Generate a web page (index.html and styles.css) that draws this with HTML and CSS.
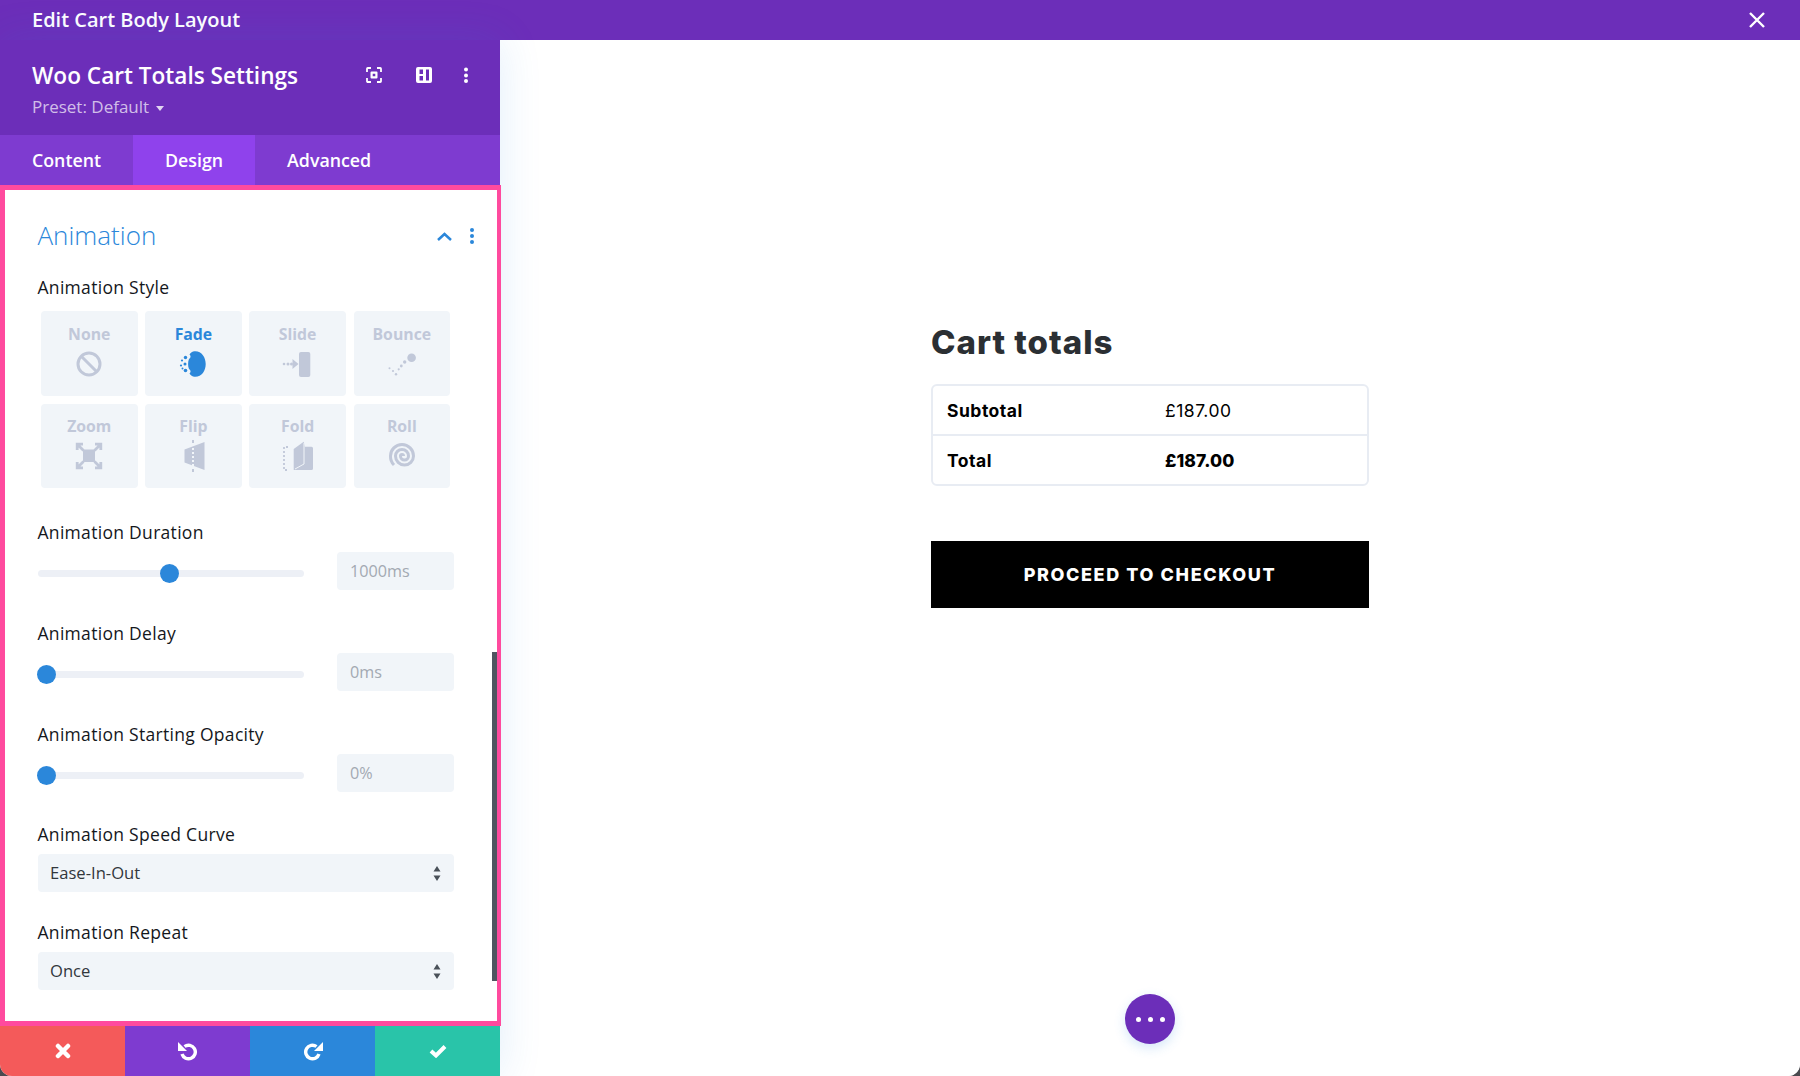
FILE: index.html
```html
<!DOCTYPE html>
<html lang="en">
<head>
<meta charset="utf-8">
<title>Edit Cart Body Layout</title>
<link rel="stylesheet" href="styles.css">
</head>
<body>
<div class="window">
  <header class="topbar">
    <span class="topbar-title">Edit Cart Body Layout</span>
    <svg class="close" viewBox="0 0 16 16" width="16" height="16"><path d="M1 1l14 14M15 1L1 15" stroke="#fff" stroke-width="2.400" fill="none"/></svg>
  </header>
  <div class="main">
    <aside class="sidebar">
      <div class="head">
        <div class="head-row">
          <h1 class="head-title">Woo Cart Totals Settings</h1>
          <div class="head-icons">
            <svg viewBox="0 0 16 16" width="16" height="16"><path d="M1 5V1.800C1 1.400 1.400 1 1.800 1H5M11 1h3.200c.4 0 .8.4.8.8V5M15 11v3.200c0 .4-.4.8-.8.8H11M5 15H1.800c-.4 0-.8-.4-.8-.8V11" fill="none" stroke="#fff" stroke-width="1.800"/><path fill-rule="evenodd" d="M5.500 4.500h5a1 1 0 0 1 1 1v5a1 1 0 0 1-1 1h-5a1 1 0 0 1-1-1v-5a1 1 0 0 1 1-1zM6.700 6.700v2.600h2.600V6.700z" fill="#fff"/></svg>
            <svg viewBox="0 0 16 16" width="16" height="16"><path fill-rule="evenodd" d="M2 0h12a2 2 0 0 1 2 2v12a2 2 0 0 1-2 2H2a2 2 0 0 1-2-2V2a2 2 0 0 1 2-2zM3.500 2.500v4.500h3.500V2.500zM3.500 9v4.500h3.500V9zM10 2.500v11h3v-11z" fill="#fff"/></svg>
            <svg class="head-kebab" viewBox="0 0 4 16" width="4" height="16"><circle cx="2" cy="2.500" r="2" fill="#fff"/><circle cx="2" cy="8.500" r="2" fill="#fff"/><circle cx="2" cy="14" r="2" fill="#fff"/></svg>
          </div>
        </div>
        <div class="preset">Preset: Default <span class="caret"></span></div>
      </div>
      <nav class="tabs">
        <span class="tab">Content</span>
        <span class="tab tab-active">Design</span>
        <span class="tab">Advanced</span>
      </nav>
      <section class="panel">
        <div class="section-head">
          <h2 class="section-title">Animation</h2>
          <div class="section-icons">
            <svg viewBox="0 0 15 9" width="15" height="9"><path d="M1 8l6.500-6L14 8" fill="none" stroke="#2b87da" stroke-width="2.500"/></svg>
            <svg viewBox="0 0 4 16" width="4" height="16"><circle cx="2" cy="2" r="2" fill="#2b87da"/><circle cx="2" cy="8" r="2" fill="#2b87da"/><circle cx="2" cy="14" r="2" fill="#2b87da"/></svg>
          </div>
        </div>

        <div class="label label-style">Animation Style</div>
        <div class="tiles">
          <div class="tile"><span class="tile-name">None</span>
            <svg class="tile-icon" viewBox="0 0 26 26"><circle cx="13" cy="13" r="11" fill="none" stroke="currentColor" stroke-width="3"/><path d="M5.500 5.500l15 15" stroke="currentColor" stroke-width="3"/></svg></div>
          <div class="tile tile-active"><span class="tile-name">Fade</span>
            <svg class="tile-icon" viewBox="0 0 26 26"><path fill="currentColor" d="M14.500 .2C21.500 -.3 25.700 6 25.700 13S21.500 26.300 14.500 25.800C12.500 25.600 10.500 24.500 9.500 22.500 11 21.500 11 19 9 18 7.800 15.500 7.800 10.500 9 8 11 7 11 4.500 9.500 3.500 10.500 1.500 12.500 .4 14.500 .2Z"/><g fill="currentColor"><circle cx="5.500" cy="6.500" r="1.700"/><circle cx="2" cy="9.500" r="1.100"/><circle cx="5" cy="13" r="1.500"/><circle cx="1" cy="14.500" r="1.100"/><circle cx="5.500" cy="19.500" r="1.800"/><circle cx="2.500" cy="17.500" r="1"/></g></svg></div>
          <div class="tile"><span class="tile-name">Slide</span>
            <svg class="tile-icon" viewBox="0 0 26 26"><rect x="14" y="1" width="11.300" height="25" rx="2" fill="currentColor"/><path d="M7.500 8l6 5-6 5z" fill="currentColor"/><circle cx="-1" cy="13" r="1.300" fill="currentColor"/><circle cx="3" cy="13" r="1.500" fill="currentColor"/><circle cx="6.500" cy="13" r="1.500" fill="currentColor"/></svg></div>
          <div class="tile"><span class="tile-name">Bounce</span>
            <svg class="tile-icon" viewBox="0 0 26 26"><circle cx="22.600" cy="6.700" r="4.300" fill="currentColor"/><circle cx="15.700" cy="11" r="1.700" fill="currentColor"/><circle cx="12.300" cy="15" r="1.400" fill="currentColor"/><circle cx="9.700" cy="18.300" r="1.100" fill="currentColor"/><circle cx="7" cy="23.300" r="1.200" fill="currentColor"/><circle cx="4" cy="20" r="1.100" fill="currentColor"/><circle cx=".5" cy="17.300" r="1" fill="currentColor"/></svg></div>
          <div class="tile"><span class="tile-name">Zoom</span>
            <svg class="tile-icon" viewBox="0 0 26 26"><rect x="7" y="6.500" width="12" height="12.500" fill="currentColor"/><path d="M1.200 7V1.200H7M24.800 7V1.200H19M1.200 19v5.800H7M24.800 19v5.800H19M2 2l5.500 5.500M24 2l-5.500 5.500M2 24l5.500-5.500M24 24l-5.500-5.500" fill="none" stroke="currentColor" stroke-width="2.800"/></svg></div>
          <div class="tile"><span class="tile-name">Flip</span>
            <svg class="tile-icon" viewBox="0 0 26 26"><path d="M4.500 6.500L24.500-1v28L4.500 19.500z" fill="currentColor"/><path d="M13-3v32" stroke="#f1f5f9" stroke-width="2" stroke-dasharray="2 2"/><path d="M13-3v3M13 26v3" stroke="currentColor" stroke-width="2"/></svg></div>
          <div class="tile"><span class="tile-name">Fold</span>
            <svg class="tile-icon" viewBox="0 0 26 26"><path d="M3 4h-4v23h4" fill="none" stroke="currentColor" stroke-width="1.800" stroke-dasharray="2 2"/><path d="M8.700 6L18.700-1.300 20 3.700h6.500a1.500 1.500 0 0 1 1.500 1.500V25.500a1.500 1.500 0 0 1-1.500 1.500H8.700z" fill="currentColor"/><path d="M19 0v21l-9 5" fill="none" stroke="#f1f5f9" stroke-width="1"/></svg></div>
          <div class="tile"><span class="tile-name">Roll</span>
            <svg class="tile-icon" viewBox="0 0 26 26"><path d="M14.500 13A1.500 1.500 0 0 0 11.500 13A4 4 0 0 0 19.500 13A6.500 6.500 0 0 0 6.500 13A9 9 0 0 0 24.500 13A11.500 11.500 0 0 0 1.500 13A12 12 0 0 0 5 22" fill="none" stroke="currentColor" stroke-width="3"/></svg></div>
        </div>

        <div class="label label-first">Animation Duration</div>
        <div class="slider-row">
          <div class="slider"><span class="thumb" style="left:123px"></span></div>
          <div class="value">1000ms</div>
        </div>

        <div class="label label-next">Animation Delay</div>
        <div class="slider-row">
          <div class="slider"><span class="thumb" style="left:0"></span></div>
          <div class="value">0ms</div>
        </div>

        <div class="label label-next">Animation Starting Opacity</div>
        <div class="slider-row">
          <div class="slider"><span class="thumb" style="left:0"></span></div>
          <div class="value">0%</div>
        </div>

        <div class="label label-speed">Animation Speed Curve</div>
        <div class="select"><span>Ease-In-Out</span>
          <svg viewBox="0 0 8 15" width="8" height="15"><path d="M4 0l3.500 5.500h-7zM4 15L.5 9.500h7z" fill="#4a5159"/></svg></div>

        <div class="label label-repeat">Animation Repeat</div>
        <div class="select"><span>Once</span>
          <svg viewBox="0 0 8 15" width="8" height="15"><path d="M4 0l3.500 5.500h-7zM4 15L.5 9.500h7z" fill="#4a5159"/></svg></div>

        <div class="scrollbar"></div>
      </section>
      <footer class="actions">
        <div class="action action-red"><svg viewBox="0 0 16 16" width="16" height="16"><path d="M3 3l10 10M13 3L3 13" stroke="#fff" stroke-width="4.500" stroke-linecap="round" fill="none"/></svg></div>
        <div class="action action-purple"><svg viewBox="0 0 20 20" width="20" height="20"><g transform="translate(20 0) scale(-1 1)"><path d="M13.500 5.500A6.800 6.800 0 1 0 16 13" fill="none" stroke="#fff" stroke-width="3.400"/><path d="M20 1v9h-9z" fill="#fff"/></g></svg></div>
        <div class="action action-blue"><svg viewBox="0 0 20 20" width="20" height="20"><path d="M13.500 5.500A6.800 6.800 0 1 0 16 13" fill="none" stroke="#fff" stroke-width="3.400"/><path d="M20 1v9h-9z" fill="#fff"/></svg></div>
        <div class="action action-green"><svg viewBox="0 0 18 14" width="18" height="14"><path d="M2 7l5 4.500L16 2.500" fill="none" stroke="#fff" stroke-width="4"/></svg></div>
      </footer>
    </aside>
    <main class="canvas">
      <div class="cart">
        <h2 class="cart-title">Cart totals</h2>
        <div class="cart-table">
          <div class="cart-row"><span class="cart-key">Subtotal</span><span class="cart-val">£187.00</span></div>
          <div class="cart-row cart-row-total"><span class="cart-key">Total</span><span class="cart-val cart-val-total">£187.00</span></div>
        </div>
        <div class="checkout">PROCEED TO CHECKOUT</div>
      </div>
      <div class="fab"><i></i><i></i><i></i></div>
    </main>
  </div>
</div>
</body>
</html>
```

FILE: styles.css
```css
* { box-sizing: border-box; }
html, body { margin: 0; height: 100%; }
body {
  background: #4a4a4f;
  font-family: "Open Sans", "Liberation Sans", sans-serif;
  overflow: hidden;
}
h1, h2 { margin: 0; font-weight: inherit; }

.window {
  width: 1800px;
  height: 1076px;
  display: flex;
  flex-direction: column;
  border-radius: 0 0 12px 12px;
  overflow: hidden;
  background: #fff;
}

.topbar {
  height: 40px;
  flex: none;
  background: #6c2eb9;
  color: #fff;
  display: flex;
  align-items: center;
  justify-content: space-between;
  padding: 0 35px 0 32px;
}
.topbar-title { font-size: 20px; font-weight: 600; line-height: 26px; margin-top: -1px; }

.main { flex: 1; display: flex; min-height: 0; }

.sidebar {
  width: 500px;
  flex: none;
  display: flex;
  flex-direction: column;
  position: relative;
  box-shadow: 0 0 40px rgba(43, 135, 218, .14);
  z-index: 1;
}

.head {
  height: 95px;
  flex: none;
  background: #6c2eb9;
  padding: 17px 32px 0 32px;
  color: #fff;
}
.head-row { display: flex; align-items: center; justify-content: space-between; height: 36px; }
.head-title { font-size: 22.6px; font-weight: 600; }
.head-icons { display: flex; align-items: center; gap: 34px; }
.head-kebab { margin-left: -2px; }
.preset { font-size: 17px; color: rgba(255, 255, 255, .7); margin-top: 2px; line-height: 24px; }
.caret {
  display: inline-block;
  width: 0;
  height: 0;
  margin-left: 2px;
  vertical-align: 2px;
  border-left: 4px solid transparent;
  border-right: 4px solid transparent;
  border-top: 5px solid rgba(255, 255, 255, .8);
}

.tabs { height: 50px; flex: none; display: flex; background: #7e3bd0; color: #fff; }
.tab { padding: 0 32px; font-size: 17.8px; font-weight: 600; line-height: 50px; }
.tab-active { background: #8f42ec; }

.panel {
  flex: 1;
  min-height: 0;
  position: relative;
  background: #fff;
  border: solid #ff4a9e;
  border-width: 5px 4px 5px 5px;
  margin-right: -1px;
  padding: 30px 0 0 32.5px;
  color: #14171c;
}

.section-head {
  display: flex;
  align-items: center;
  justify-content: space-between;
  height: 30px;
  width: 436px;
}
.section-title { font-size: 26px; font-weight: 300; color: #2b87da; line-height: 29px; }
.section-icons { display: flex; align-items: center; gap: 18px; margin-top: 2px; }

.label { font-size: 17.5px; letter-spacing: .3px; line-height: 20px; margin-bottom: 10px; }
.label-style { margin-top: 27px; margin-bottom: 14px; }
.label-first { margin-top: 34px; }
.label-next { margin-top: 33px; }
.label-speed { margin-top: 32px; }
.label-repeat { margin-top: 30px; }

.tiles {
  display: grid;
  grid-template-columns: repeat(4, 96.5px);
  grid-template-rows: 85px 84px;
  gap: 8px 7.7px;
  margin-left: 3.5px;
}
.tile {
  background: #f1f5f9;
  border-radius: 4px;
  color: #c1c8d9;
  display: flex;
  flex-direction: column;
  align-items: center;
  padding-top: 13px;
}
.tile:nth-child(n+5) { padding-top: 12px; }
.tile-active { color: #2b87da; }
.tile-name { font-size: 15.8px; font-weight: 700; line-height: 20px; }
.tile-icon { width: 26px; height: 26px; margin-top: 7px; overflow: visible; }

.slider-row { display: flex; align-items: center; width: 416.500px; height: 38px; justify-content: space-between; }
.slider {
  width: 266px;
  height: 7px;
  border-radius: 4px;
  background: #edf0f6;
  position: relative;
  margin-top: 4px;
}
.thumb {
  position: absolute;
  top: -6px;
  width: 19px;
  height: 19px;
  border-radius: 50%;
  background: #2b87da;
  margin-left: -.5px;
}
.value {
  width: 117px;
  height: 38px;
  border-radius: 4px;
  background: #f1f5f9;
  color: #a3a9b2;
  font-size: 16.2px;
  line-height: 38px;
  padding-left: 13px;
}

.select {
  width: 416.500px;
  height: 38px;
  border-radius: 4px;
  background: #f1f5f9;
  color: #32373c;
  font-size: 16.6px;
  line-height: 36px;
  display: flex;
  align-items: center;
  justify-content: space-between;
  padding: 0 13px 0 12.5px;
}

.scrollbar {
  position: absolute;
  right: 0;
  top: 462px;
  width: 5px;
  height: 329px;
  background: #4f5560;
}

.actions { height: 50px; flex: none; display: grid; grid-template-columns: repeat(4, 125px); }
.action { display: flex; align-items: center; justify-content: center; }
.action-red { background: #f45a5a; }
.action-purple { background: #7e3bd0; }
.action-blue { background: #2b87da; }
.action-green { background: #29c4a9; }

.canvas { flex: 1; position: relative; background: #fff; }
.cart {
  width: 438px;
  margin-left: 431px;
  padding-top: 281px;
  font-family: Inter, "Liberation Sans", sans-serif;
  color: #000;
}
.cart-title { font-size: 33px; font-weight: 800; letter-spacing: 1px; color: #2b2f33; line-height: 42px; }
.cart-table {
  margin-top: 21px;
  border: 2px solid #e8ecf3;
  border-radius: 6px;
  height: 102px;
}
.cart-row { display: flex; height: 48px; align-items: center; padding-left: 14px; font-size: 17.5px; letter-spacing: .5px; }
.cart-row-total { height: 50px; border-top: 2px solid #e8ecf3; }
.cart-key { width: 218px; font-weight: 700; }
.cart-val { font-weight: 400; }
.cart-val-total { font-weight: 800; letter-spacing: .1px; }
.checkout {
  margin-top: 55px;
  height: 67px;
  background: #000;
  color: #fff;
  display: flex;
  align-items: center;
  justify-content: center;
  font-size: 18px;
  font-weight: 800;
  letter-spacing: 1.6px;
}

.fab {
  position: absolute;
  left: 625px;
  bottom: 32px;
  width: 50px;
  height: 50px;
  border-radius: 50%;
  background: #6c2eb9;
  box-shadow: 0 4px 12px rgba(43, 135, 218, .2);
  display: flex;
  align-items: center;
  justify-content: center;
  gap: 7px;
  padding-top: 1px;
}
.fab i { width: 5px; height: 5px; border-radius: 50%; background: #fff; }
```
